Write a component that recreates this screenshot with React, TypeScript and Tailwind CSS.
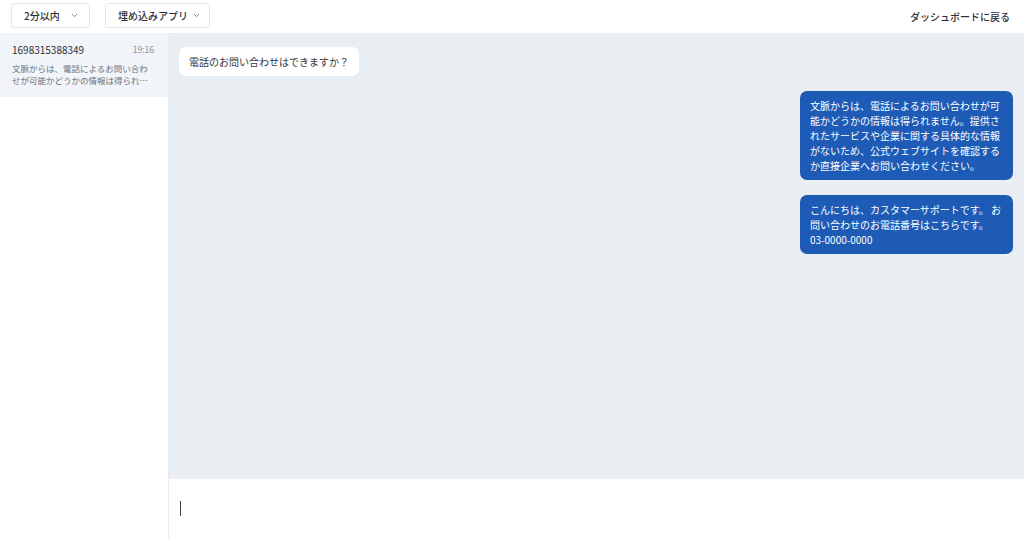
import React from 'react';
import { ChevronDown } from 'lucide-react';

const FONT = { fontFamily: '"Noto Sans CJK JP", "Noto Sans", sans-serif' };

const MESSAGES = [
  { from: 'user', text: '電話のお問い合わせはできますか？' },
  {
    from: 'bot',
    text: '文脈からは、電話によるお問い合わせが可能かどうかの情報は得られません。提供されたサービスや企業に関する具体的な情報がないため、公式ウェブサイトを確認するか直接企業へお問い合わせください。',
  },
  {
    from: 'bot',
    text: 'こんにちは、カスタマーサポートです。 お問い合わせのお電話番号はこちらです。\n03-0000-0000',
  },
];

const Dropdown: React.FC<{ label: string; className?: string }> = ({ label, className }) => (
  <button
    className={`h-[25px] flex items-center justify-between gap-[4px] pl-[12px] pr-[8px] border border-[#e3e7ec] rounded-[3px] bg-white text-[10px] font-medium text-[#2b2f36] ${className ?? ''}`}
  >
    <span>{label}</span>
    <ChevronDown size={9} strokeWidth={2} className="text-[#555]" />
  </button>
);

const App: React.FC = () => {
  return (
    <div className="w-full h-[538px] flex flex-col bg-white overflow-hidden" style={FONT}>
      <header className="h-[33px] shrink-0 flex items-center justify-between pl-[11px] pr-[14px] pb-[2px]">
        <div className="flex items-center gap-[15px]">
          <Dropdown label="2分以内" className="w-[79px] pr-[10px]" />
          <Dropdown label="埋め込みアプリ" />
        </div>
        <a className="text-[10px] font-medium text-[#2b2f36] pt-[2px]">ダッシュボードに戻る</a>
      </header>

      <div className="flex flex-1 min-h-0">
        <aside className="w-[169px] shrink-0 border-r border-[#e6eaef]">
          <div className="h-[64px] bg-[#f1f4f8] px-[12px] pt-[9px]">
            <div className="flex items-center justify-between">
              <span className="text-[10px] text-[#2b2f36] leading-[15px]">1698315388349</span>
              <span className="text-[8.5px] text-[#8a9099] pr-[2px]">19:16</span>
            </div>
            <p className="mt-[5px] text-[8.5px] leading-[12px] text-[#6b7280] line-clamp-2">
              文脈からは、電話によるお問い合わせが可能かどうかの情報は得られません。提供されたサービスや企業に関する具体的な情報がないため
            </p>
          </div>
        </aside>

        <main className="flex-1 flex flex-col min-w-0">
          <div className="flex-1 bg-[#e9eef3] pt-[14px] pl-[10px] pr-[11px] flex flex-col gap-[15px]">
            {MESSAGES.map((m, i) => (
              <div key={i} className={`flex ${m.from === 'bot' ? 'justify-end' : 'justify-start'}`}>
                <div
                  className={`max-w-[213px] rounded-[7px] px-[10px] py-[7px] text-[10px] leading-[15px] whitespace-pre-line ${
                    m.from === 'bot' ? 'w-[213px] bg-[#1e5bb6] text-white' : 'bg-white text-[#333840]'
                  }`}
                >
                  {m.text}
                </div>
              </div>
            ))}
          </div>
          <div className="h-[59px] shrink-0 bg-white flex items-center pl-[11px]">
            <span className="w-px h-[15px] bg-[#444]" />
          </div>
        </main>
      </div>
    </div>
  );
};

export default App;
